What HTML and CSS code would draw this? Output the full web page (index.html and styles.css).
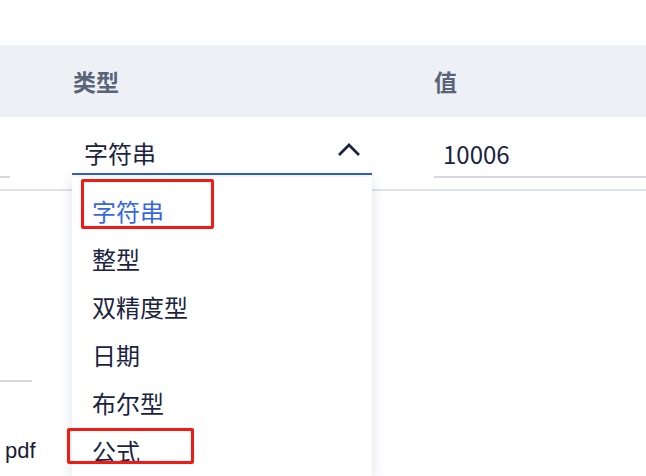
FILE: index.html
```html
<!DOCTYPE html>
<html lang="zh-CN">
<head>
    <meta charset="UTF-8">
    <title>字段类型</title>
    <link rel="stylesheet" href="styles.css">
</head>
<body>
    <div class="table">
        <!-- Header -->
        <div class="thead">
            <div class="cell"></div>
            <div class="cell th">类型</div>
            <div class="cell th th-value">值</div>
        </div>

        <!-- Row being edited -->
        <div class="row">
            <div class="cell cell-side"><div class="field-stub"></div></div>
            <div class="cell cell-type">
                <div class="select open">
                    <span class="select-text">字符串</span>
                    <svg class="chevron" width="24" height="15" viewBox="0 0 24 15">
                        <path d="M2 13 L12 3 L22 13" fill="none" stroke="#1b2340" stroke-width="2.8"/>
                    </svg>
                </div>
                <ul class="dropdown">
                    <li class="option selected">字符串</li>
                    <li class="option">整型</li>
                    <li class="option">双精度型</li>
                    <li class="option">日期</li>
                    <li class="option">布尔型</li>
                    <li class="option">公式</li>
                </ul>
            </div>
            <div class="cell cell-value">
                <div class="input">10006</div>
            </div>
        </div>

        <!-- Next rows (left column only visible) -->
        <div class="side">
            <div class="side-line"></div>
            <div class="side-file">pdf</div>
        </div>
    </div>

    <!-- annotation marks -->
    <div class="mark mark-1"></div>
    <div class="mark mark-2"></div>
</body>
</html>
```

FILE: styles.css
```css
html, body {
    height: 476px;
    overflow: hidden;
}

body {
    margin: 0;
    font-family: "Noto Sans CJK SC", "Noto Sans", sans-serif;
    background-color: #fff;
    color: #1b2340;
}

.table {
    padding-top: 45px;
}

.thead, .row {
    display: grid;
    grid-template-columns: 72px 362px 1fr;
}

.thead {
    height: 72px;
    background-color: #edf0f5;
    align-items: center;
}

.th {
    font-size: 23px;
    font-weight: bold;
    color: #5a6478;
    padding-left: 1px;
}

.th-value {
    padding-left: 0;
}

.row {
    height: 72px;
    border-bottom: 2px solid #e0e3e9;
    position: relative;
}

.cell-side {
    overflow: hidden;
}

.field-stub {
    width: 10px;
    margin-top: 59px;
    border-bottom: 2px solid #d6d9e0;
}

.cell-type {
    position: relative;
}

.select {
    width: 300px;
    height: 58px;
    box-sizing: border-box;
    padding: 0 11px 0 12px;
    display: flex;
    align-items: center;
    justify-content: space-between;
    border-bottom: 2px solid #2f5fd6;
    font-size: 24px;
}

.select-text {
    margin-top: 14px;
}

.chevron {
    margin-top: 8px;
}

.input {
    height: 61px;
    box-sizing: border-box;
    padding: 13px 0 0 9px;
    font-size: 24px;
    border-bottom: 2px solid #d6d9e0;
    line-height: 48px;
}

.dropdown {
    position: absolute;
    left: 0;
    top: 60px;
    width: 300px;
    height: 299px;
    box-sizing: border-box;
    margin: 0;
    padding: 10px 0 0 0;
    list-style: none;
    background-color: #fff;
    border-radius: 4px 4px 0 0;
    box-shadow: 0 3px 14px rgba(30, 40, 70, 0.14);
    overflow: hidden;
    z-index: 2;
}

.option {
    height: 48px;
    line-height: 48px;
    padding-left: 20px;
    font-size: 24px;
    color: #1b2340;
}

.option.selected {
    color: #3767e0;
}

.side {
    width: 40px;
}

.side-line {
    width: 32px;
    margin-top: 189px;
    border-bottom: 2px solid #d6d9e0;
}

.side-file {
    margin-top: 56px;
    padding-left: 5px;
    font-family: "Liberation Sans", Arial, sans-serif;
    font-size: 22px;
    color: #1a2033;
}

.mark {
    position: absolute;
    border: 3px solid #f21b14;
    border-radius: 2px;
    z-index: 3;
}

.mark-1 {
    left: 81px;
    top: 179px;
    width: 127px;
    height: 44px;
}

.mark-2 {
    left: 67px;
    top: 428px;
    width: 121px;
    height: 30px;
}
```
